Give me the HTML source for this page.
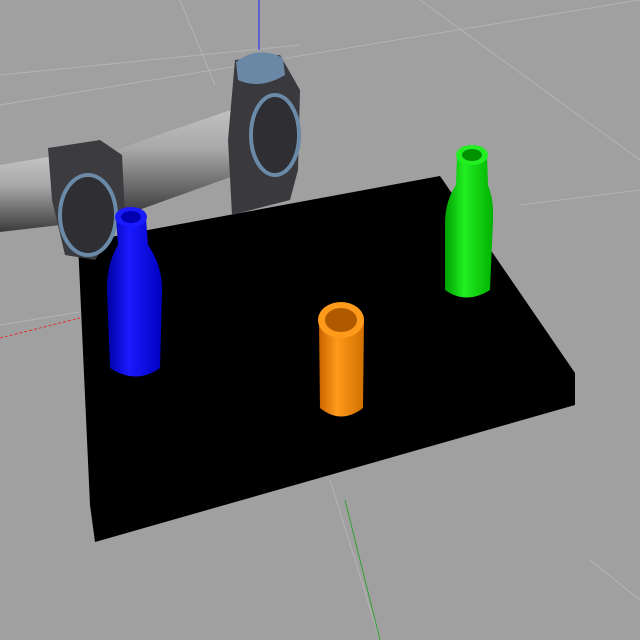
<!DOCTYPE html>
<html><head><style>html,body{margin:0;padding:0;width:640px;height:640px;overflow:hidden;background:#a0a0a0}</style></head>
<body>
<svg width="640" height="640" viewBox="0 0 640 640" xmlns="http://www.w3.org/2000/svg">
<defs>
<linearGradient id="cyl" x1="0" y1="0" x2="0" y2="1">
<stop offset="0" stop-color="#c4c4c4"/><stop offset="0.4" stop-color="#a8a8a8"/><stop offset="1" stop-color="#3a3a3a"/></linearGradient>
<linearGradient id="blue" x1="0" y1="0" x2="1" y2="0"><stop offset="0" stop-color="#0000a0"/><stop offset="0.4" stop-color="#1a1aff"/><stop offset="1" stop-color="#0000c0"/></linearGradient>
<linearGradient id="green" x1="0" y1="0" x2="1" y2="0"><stop offset="0" stop-color="#00a000"/><stop offset="0.4" stop-color="#22ee22"/><stop offset="1" stop-color="#00b000"/></linearGradient>
<linearGradient id="orange" x1="0" y1="0" x2="1" y2="0"><stop offset="0" stop-color="#c86400"/><stop offset="0.4" stop-color="#ff9a1a"/><stop offset="1" stop-color="#d07000"/></linearGradient>
</defs>
<rect width="640" height="640" fill="#a0a0a0"/>
<g stroke="#b4b4b4" stroke-width="1" fill="none">
<line x1="0" y1="105" x2="640" y2="0"/>
<line x1="0" y1="75" x2="300" y2="45"/>
<line x1="180" y1="0" x2="215" y2="85"/>
<line x1="420" y1="0" x2="640" y2="160"/>
<line x1="520" y1="205" x2="640" y2="190"/>
<line x1="0" y1="325" x2="80" y2="312"/>
<line x1="330" y1="480" x2="380" y2="640"/>
<line x1="590" y1="560" x2="640" y2="600"/>
</g>
<line x1="0" y1="338" x2="80" y2="318" stroke="#e03030" stroke-dasharray="3,2"/>
<line x1="345" y1="500" x2="380" y2="640" stroke="#30a030"/>
<line x1="259" y1="0" x2="259" y2="50" stroke="#2020ff"/>
<!-- table -->
<polygon points="78,243 440,176 575,373 575,405 95,542 90,505" fill="#000"/>
<!-- robot -->
<polygon points="0,165 60,155 60,225 0,232" fill="url(#cyl)"/>
<polygon points="115,150 245,105 250,170 125,215" fill="url(#cyl)"/>
<path d="M48,148 L100,140 L122,155 L125,215 L95,260 L65,255 L52,200 Z" fill="#3c3c40"/>
<ellipse cx="88" cy="215" rx="28" ry="40" fill="#2e2e33" stroke="#6a8aa8" stroke-width="4"/>
<path d="M235,60 L280,55 L300,90 L298,170 L290,200 L232,215 L228,140 Z" fill="#3a3a3e"/>
<path d="M236,62 Q258,45 283,58 L285,75 Q260,90 238,80 Z" fill="#6a88a6"/>
<ellipse cx="275" cy="135" rx="24" ry="40" fill="#2e2e33" stroke="#6a8aa8" stroke-width="4"/>
<!-- blue bottle -->
<path d="M116,218 L146,218 L148,245 Q162,265 162,290 L160,368 Q136,385 110,368 L107,292 Q106,265 118,245 Z" fill="url(#blue)"/>
<ellipse cx="131" cy="217" rx="16" ry="10" fill="#1a1aff"/>
<ellipse cx="131" cy="217" rx="10" ry="6" fill="#0000b0"/>
<!-- green bottle -->
<path d="M457,156 L487,156 L488,185 Q494,200 493,220 L490,290 Q466,305 445,290 L445,220 Q446,200 456,185 Z" fill="url(#green)"/>
<ellipse cx="472" cy="155" rx="16" ry="10" fill="#22ee22"/>
<ellipse cx="472" cy="155" rx="10" ry="6" fill="#009000"/>
<!-- orange cylinder -->
<path d="M319,320 L364,320 L363,408 Q341,425 320,408 Z" fill="url(#orange)"/>
<ellipse cx="341" cy="320" rx="23" ry="18" fill="#ff9a1a"/>
<ellipse cx="341" cy="320" rx="16" ry="12" fill="#b05a00"/>
</svg>
</body></html>
